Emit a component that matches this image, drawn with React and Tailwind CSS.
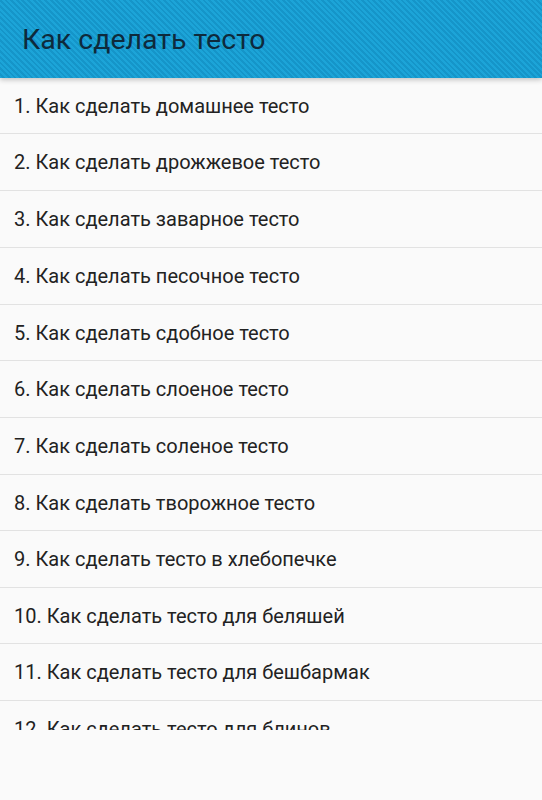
import React from "react";

const items = [
  ["1. Как сделать домашнее тесто", "h-[56px]"],
  ["2. Как сделать дрожжевое тесто", "h-[57px]"],
  ["3. Как сделать заварное тесто", "h-[57px]"],
  ["4. Как сделать песочное тесто", "h-[57px]"],
  ["5. Как сделать сдобное тесто", "h-[56px]"],
  ["6. Как сделать слоеное тесто", "h-[57px]"],
  ["7. Как сделать соленое тесто", "h-[57px]"],
  ["8. Как сделать творожное тесто", "h-[56px]"],
  ["9. Как сделать тесто в хлебопечке", "h-[57px]"],
  ["10. Как сделать тесто для беляшей", "h-[56px]"],
  ["11. Как сделать тесто для бешбармак", "h-[57px]"],
  ["12. Как сделать тесто для блинов", "h-[57px]"],
];

export default function App() {
  return (
    <div className="w-[542px] h-[800px] bg-[#fafafa] flex flex-col overflow-hidden" style={{ fontFamily: "Roboto, 'Noto Sans', sans-serif" }}>
      <div className="relative z-10 h-[78px] shrink-0 flex items-center pl-[22px] pt-[3px] bg-[#1ca4d8] bg-[repeating-linear-gradient(45deg,#1ca4d8_0px,#1ca4d8_2px,#1595c9_2px,#1595c9_4px)] shadow-[0_2px_5px_rgba(0,0,0,0.22)]">
        <span className="text-[28.5px] text-[#0e2a3c] leading-none">Как сделать тесто</span>
      </div>
      <div className="h-[652px] overflow-hidden flex flex-col">
        {items.map(([t, h], i) => (
          <div key={i} className={`${h} shrink-0 flex items-center pl-[14px] border-b border-[#e2e2e2] text-[20px] text-[#222222]`}>
            {t}
          </div>
        ))}
      </div>
    </div>
  );
}
